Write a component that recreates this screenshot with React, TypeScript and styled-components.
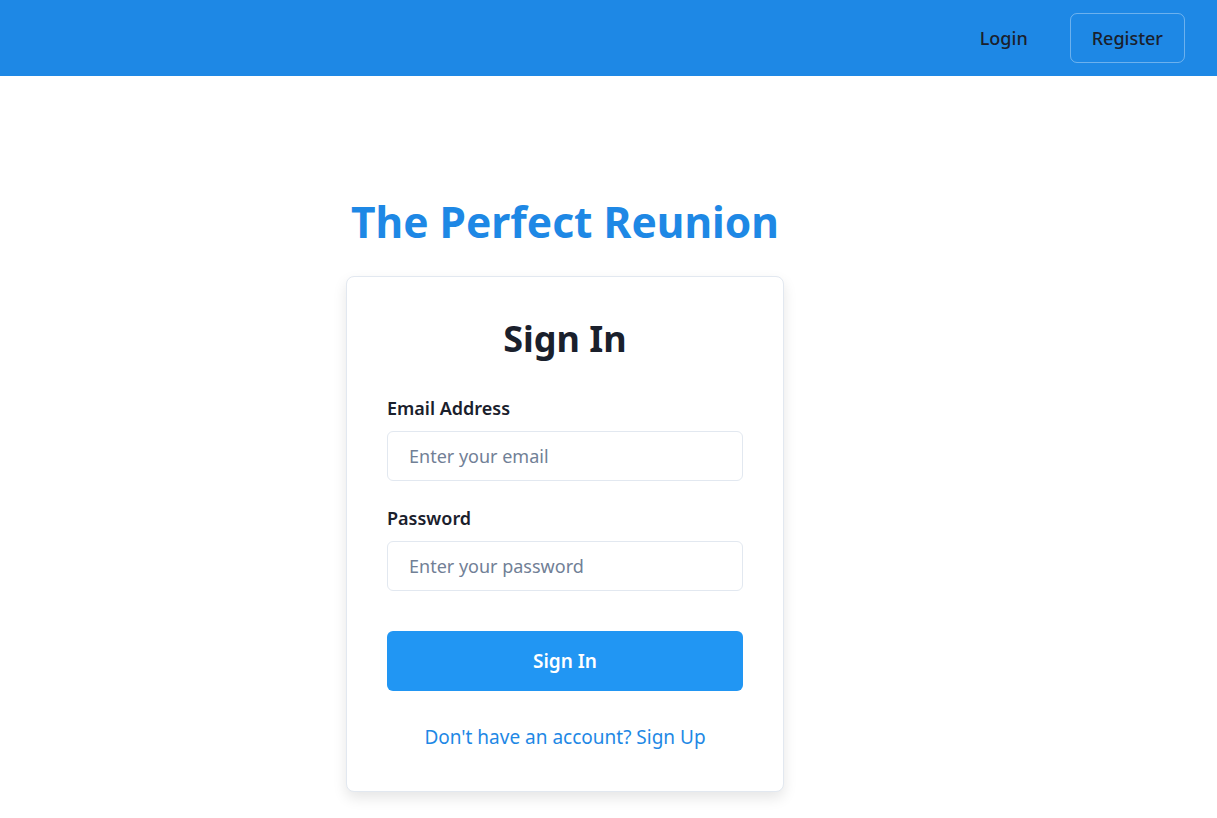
import React from "react";
import styled, { createGlobalStyle } from "styled-components";

const GlobalStyle = createGlobalStyle`
  * {
    box-sizing: border-box;
  }
  body {
    margin: 0;
    background: #ffffff;
    font-family: "Noto Sans", "Open Sans", sans-serif;
    color: #1a202c;
  }
`;

const NavBar = styled.header`
  height: 76px;
  background-color: #1e88e5;
  display: flex;
  align-items: center;
  justify-content: flex-end;
  padding: 0 32px;
  gap: 20px;
`;

const NavButton = styled.button<{ $outlined?: boolean }>`
  height: 50px;
  margin-top: -1px;
  padding: 0 21px;
  font-family: inherit;
  font-size: 18px;
  font-weight: 500;
  color: #1a202c;
  background: transparent;
  border: 1px solid ${(p) => (p.$outlined ? "rgba(255, 255, 255, 0.35)" : "transparent")};
  border-radius: 7px;
  cursor: pointer;
`;

const Main = styled.main`
  display: flex;
  flex-direction: column;
  align-items: center;
  padding: 120px 87px 40px 0;
`;

const Brand = styled.h1`
  margin: 0 0 29px;
  font-size: 42.5px;
  font-weight: 700;
  line-height: 1.2;
  color: #1e88e5;
`;

const Card = styled.div`
  width: 438px;
  padding: 40px;
  background: #ffffff;
  border: 1px solid #e2e8f0;
  border-radius: 8px;
  box-shadow: 0 6px 14px rgba(0, 0, 0, 0.1);
`;

const CardTitle = styled.h2`
  margin: 0 0 35px;
  text-align: center;
  font-size: 36px;
  font-weight: 700;
  line-height: 1.2;
  color: #1a202c;
`;

const Field = styled.div`
  display: flex;
  flex-direction: column;
  gap: 10px;
  margin-bottom: 24px;
`;

const Label = styled.label`
  font-size: 18px;
  font-weight: 600;
  line-height: 26px;
  color: #1a202c;
`;

const Input = styled.input`
  height: 50px;
  width: 100%;
  padding: 0 21px;
  font-family: inherit;
  font-size: 18px;
  color: #1a202c;
  border: 1px solid #e2e8f0;
  border-radius: 6px;
  outline: none;

  &::placeholder {
    color: #718096;
  }
`;

const SubmitButton = styled.button`
  width: 100%;
  height: 60px;
  margin-top: 16px;
  font-family: inherit;
  font-size: 19px;
  font-weight: 600;
  color: #ffffff;
  background-color: #2196f3;
  border: none;
  border-radius: 6px;
  cursor: pointer;
`;

const Footer = styled.p`
  margin: 32px 0 0;
  text-align: center;
  font-size: 19px;
  line-height: 28px;
`;

const SignUpLink = styled.a`
  color: #1e88e5;
  text-decoration: none;
`;

const App: React.FC = () => {
  return (
    <>
      <GlobalStyle />
      <NavBar>
        <NavButton>Login</NavButton>
        <NavButton $outlined>Register</NavButton>
      </NavBar>
      <Main>
        <Brand>The Perfect Reunion</Brand>
        <Card>
          <CardTitle>Sign In</CardTitle>
          <form onSubmit={(e) => e.preventDefault()}>
            <Field>
              <Label htmlFor="email">Email Address</Label>
              <Input id="email" type="email" placeholder="Enter your email" />
            </Field>
            <Field>
              <Label htmlFor="password">Password</Label>
              <Input id="password" type="password" placeholder="Enter your password" />
            </Field>
            <SubmitButton type="submit">Sign In</SubmitButton>
          </form>
          <Footer>
            <SignUpLink href="#signup">Don't have an account? Sign Up</SignUpLink>
          </Footer>
        </Card>
      </Main>
    </>
  );
};

export default App;
